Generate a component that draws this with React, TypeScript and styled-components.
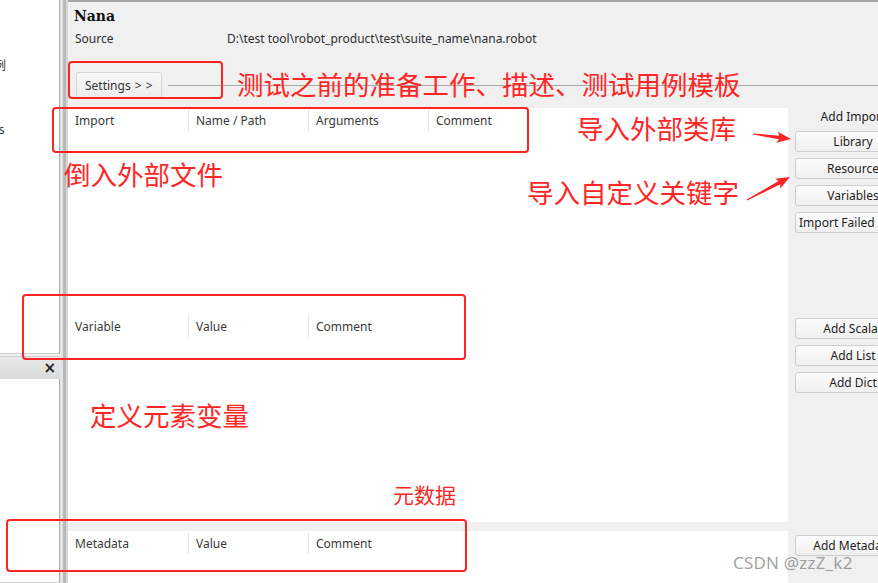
import React from "react";
import styled, { createGlobalStyle } from "styled-components";

const Global = createGlobalStyle`
  html, body { margin: 0; padding: 0; background: #f0f0f0; }
  body { width: 878px; height: 583px; overflow: hidden; font-family: "Noto Sans", "Noto Sans CJK SC", sans-serif; }
  #root { width: 878px; height: 583px; }
`;

const Page = styled.div`
  position: relative;
  display: flex;
  width: 878px;
  height: 583px;
  overflow: hidden;
  font-size: 12px;
  color: #2e2e2e;
`;

/* ---------- left tree / pane ---------- */
const LeftColumn = styled.div`
  width: 60px;
  display: flex;
  flex-direction: column;
  flex: none;
`;

const TreePanel = styled.div<{ $h?: number }>`
  background: #fff;
  border-right: 1px solid #a9a9a9;
  overflow: hidden;
  ${(p) => (p.$h ? `height: ${p.$h}px; flex: none;` : "flex: 1;")}
  border-bottom: 1px solid #d0d0d0;
  display: flex;
  flex-direction: column;
`;

const TreeItem = styled.div<{ $shift: number; $top: number }>`
  margin-left: ${(p) => p.$shift}px;
  margin-top: ${(p) => p.$top}px;
  white-space: nowrap;
  line-height: 16px;
  font-size: 12px;
  color: #333;
`;

const PaneCaption = styled.div`
  height: 22px;
  margin-top: 2px;
  flex: none;
  background: linear-gradient(#e9e9e9, #dadada);
  border-top: 1px solid #cfcfcf;
  display: flex;
  align-items: center;
  justify-content: flex-end;
  padding-right: 4px;
  font: bold 15px "DejaVu Sans", sans-serif;
  color: #222;
`;

const Splitter = styled.div`
  width: 8px;
  flex: none;
  background: linear-gradient(90deg, #e4e4e4 0 3px, #b9b9b9 3px 6px, #d6d6d6 6px 8px);
`;

/* ---------- editor ---------- */
const Editor = styled.div`
  flex: 1;
  display: flex;
  flex-direction: column;
  background: #f0f0f0;
  border-top: 2px solid #a6a6a6;
  min-width: 0;
`;

const SuiteHeader = styled.div`
  height: 106px;
  flex: none;
  padding-left: 6px;
  display: flex;
  flex-direction: column;
`;

const SuiteName = styled.div`
  margin-top: 6px;
  font: bold 14px/16px "DejaVu Serif", serif;
  color: #111;
`;

const SourceRow = styled.div`
  display: flex;
  margin-top: 7px;
  margin-left: 1px;
  line-height: 16px;
`;

const SourceLabel = styled.div`
  width: 152px;
`;

const TabRow = styled.div`
  display: flex;
  align-items: center;
  margin-top: 25px;
  margin-left: 2px;
`;

const Tab = styled.div`
  width: 86px;
  height: 27px;
  box-sizing: border-box;
  border: 1px solid #d6d6d6;
  border-radius: 3px;
  background: linear-gradient(#f7f7f7, #ececec);
  padding-left: 8px;
  display: flex;
  align-items: center;
  color: #333;
  word-spacing: 1px;
`;

const TabLine = styled.div`
  flex: 1;
  height: 1px;
  margin-left: 6px;
  background: #a8a8a8;
`;

const Section = styled.div<{ $h?: number }>`
  display: flex;
  ${(p) => (p.$h ? `height: ${p.$h}px; flex: none;` : "flex: 1;")}
`;

const Grid = styled.div`
  width: 720px;
  flex: none;
  background: #fff;
`;

const GridHeader = styled.div<{ $top: number }>`
  display: flex;
  margin-top: ${(p) => p.$top}px;
  height: 22px;
`;

const HeaderCell = styled.div<{ $first?: boolean }>`
  width: 120px;
  box-sizing: border-box;
  padding-left: 7px;
  display: flex;
  align-items: center;
  color: #3a3a3a;
  border-left: ${(p) => (p.$first ? "none" : "1px solid #e6e6e6")};
`;

const Strip = styled.div`
  height: 9px;
  flex: none;
`;

const SideColumn = styled.div<{ $top: number }>`
  flex: 1;
  padding-left: 7px;
  padding-top: ${(p) => p.$top}px;
  display: flex;
  flex-direction: column;
  gap: 6px;
  overflow: hidden;
`;

const SideLabel = styled.div`
  width: 116px;
  flex: none;
  text-align: center;
  line-height: 18px;
  margin-bottom: -1px;
  color: #222;
`;

const SideButton = styled.div<{ $left?: boolean }>`
  width: 116px;
  height: 21px;
  flex: none;
  box-sizing: border-box;
  border: 1px solid #cdcdcd;
  border-radius: 3px;
  background: linear-gradient(#fcfcfc, #efefef);
  display: flex;
  align-items: center;
  justify-content: ${(p) => (p.$left ? "flex-start" : "center")};
  padding-left: ${(p) => (p.$left ? "3px" : "0")};
  white-space: nowrap;
  overflow: hidden;
  color: #1e1e1e;
`;

/* ---------- annotations (overlay) ---------- */
const RedBox = styled.div`
  position: absolute;
  border: 2px solid #ff2424;
  border-radius: 4px;
  box-sizing: border-box;
  pointer-events: none;
`;

const Note = styled.div<{ $size?: number }>`
  position: absolute;
  font-family: "Noto Sans CJK SC", sans-serif;
  font-size: ${(p) => p.$size ?? 26.5}px;
  line-height: 30px;
  color: #ff2626;
  white-space: nowrap;
`;

const Watermark = styled.div`
  position: absolute;
  left: 733px;
  top: 551px;
  font: 17px/24px "Noto Sans", sans-serif;
  color: rgba(120, 120, 120, 0.7);
  letter-spacing: 0.2px;
`;

const ArrowSvg = styled.svg`
  position: absolute;
  overflow: visible;
  pointer-events: none;
`;

function Arrow({ x1, y1, x2, y2 }: { x1: number; y1: number; x2: number; y2: number }) {
  const dx = x2 - x1;
  const dy = y2 - y1;
  const L = Math.hypot(dx, dy);
  const ux = dx / L, uy = dy / L;
  const nx = -uy, ny = ux;
  const left = Math.min(x1, x2) - 10;
  const top = Math.min(y1, y2) - 10;
  const pt = (a: number, b: number) => `${x1 + ux * a + nx * b - left},${y1 + uy * a + ny * b - top}`;
  const pts = [pt(0, 0.6), pt(L - 12, 1.8), pt(L - 14, 5.5), pt(L, 0), pt(L - 14, -5.5), pt(L - 12, -1.8), pt(0, -0.6)].join(" ");
  return (
    <ArrowSvg
      style={{ left, top, width: Math.abs(dx) + 20, height: Math.abs(dy) + 20 }}
      viewBox={`0 0 ${Math.abs(dx) + 20} ${Math.abs(dy) + 20}`}
    >
      <polygon points={pts} fill="#ff2424" />
    </ArrowSvg>
  );
}

export default function App() {
  return (
    <>
      <Global />
      <Page>
        <LeftColumn>
          <TreePanel $h={353}>
            <TreeItem $shift={-42} $top={58}>测试用例</TreeItem>
            <TreeItem $shift={-50} $top={48}>Keywords</TreeItem>
          </TreePanel>
          <PaneCaption>×</PaneCaption>
          <TreePanel />
        </LeftColumn>
        <Splitter />
        <Editor>
          <SuiteHeader>
            <SuiteName>Nana</SuiteName>
            <SourceRow>
              <SourceLabel>Source</SourceLabel>
              <div>D:\test tool\robot_product\test\suite_name\nana.robot</div>
            </SourceRow>
            <TabRow>
              <Tab>Settings &gt; &gt;</Tab>
              <TabLine />
            </TabRow>
          </SuiteHeader>

          <Section $h={205}>
            <Grid>
              <GridHeader $top={1}>
                <HeaderCell $first>Import</HeaderCell>
                <HeaderCell>Name / Path</HeaderCell>
                <HeaderCell>Arguments</HeaderCell>
                <HeaderCell>Comment</HeaderCell>
              </GridHeader>
            </Grid>
            <SideColumn $top={0}>
              <SideLabel>Add Import</SideLabel>
              <SideButton>Library</SideButton>
              <SideButton>Resource</SideButton>
              <SideButton>Variables</SideButton>
              <SideButton $left>Import Failed Help</SideButton>
            </SideColumn>
          </Section>

          <Section $h={209}>
            <Grid>
              <GridHeader $top={2}>
                <HeaderCell $first>Variable</HeaderCell>
                <HeaderCell>Value</HeaderCell>
                <HeaderCell>Comment</HeaderCell>
              </GridHeader>
            </Grid>
            <SideColumn $top={5}>
              <SideButton>Add Scalar</SideButton>
              <SideButton>Add List</SideButton>
              <SideButton>Add Dict</SideButton>
            </SideColumn>
          </Section>

          <Strip />

          <Section>
            <Grid>
              <GridHeader $top={1}>
                <HeaderCell $first>Metadata</HeaderCell>
                <HeaderCell>Value</HeaderCell>
                <HeaderCell>Comment</HeaderCell>
              </GridHeader>
            </Grid>
            <SideColumn $top={4}>
              <SideButton>Add Metadata</SideButton>
            </SideColumn>
          </Section>
        </Editor>

        <RedBox style={{ left: 68, top: 61, width: 155, height: 38 }} />
        <RedBox style={{ left: 52, top: 107, width: 477, height: 46 }} />
        <RedBox style={{ left: 22, top: 294, width: 444, height: 66 }} />
        <RedBox style={{ left: 6, top: 519, width: 461, height: 53 }} />

        <Note style={{ left: 237, top: 69 }}>测试之前的准备工作、描述、测试用例模板</Note>
        <Note style={{ left: 577, top: 113 }}>导入外部类库</Note>
        <Note style={{ left: 64, top: 159 }}>倒入外部文件</Note>
        <Note style={{ left: 527, top: 177 }}>导入自定义关键字</Note>
        <Note style={{ left: 90, top: 400 }}>定义元素变量</Note>
        <Note $size={21} style={{ left: 393, top: 479 }}>元数据</Note>

        <Arrow x1={753} y1={134} x2={791} y2={139} />
        <Arrow x1={747} y1={200} x2={790} y2={177} />

        <Watermark>CSDN @zzZ_k2</Watermark>
      </Page>
    </>
  );
}
